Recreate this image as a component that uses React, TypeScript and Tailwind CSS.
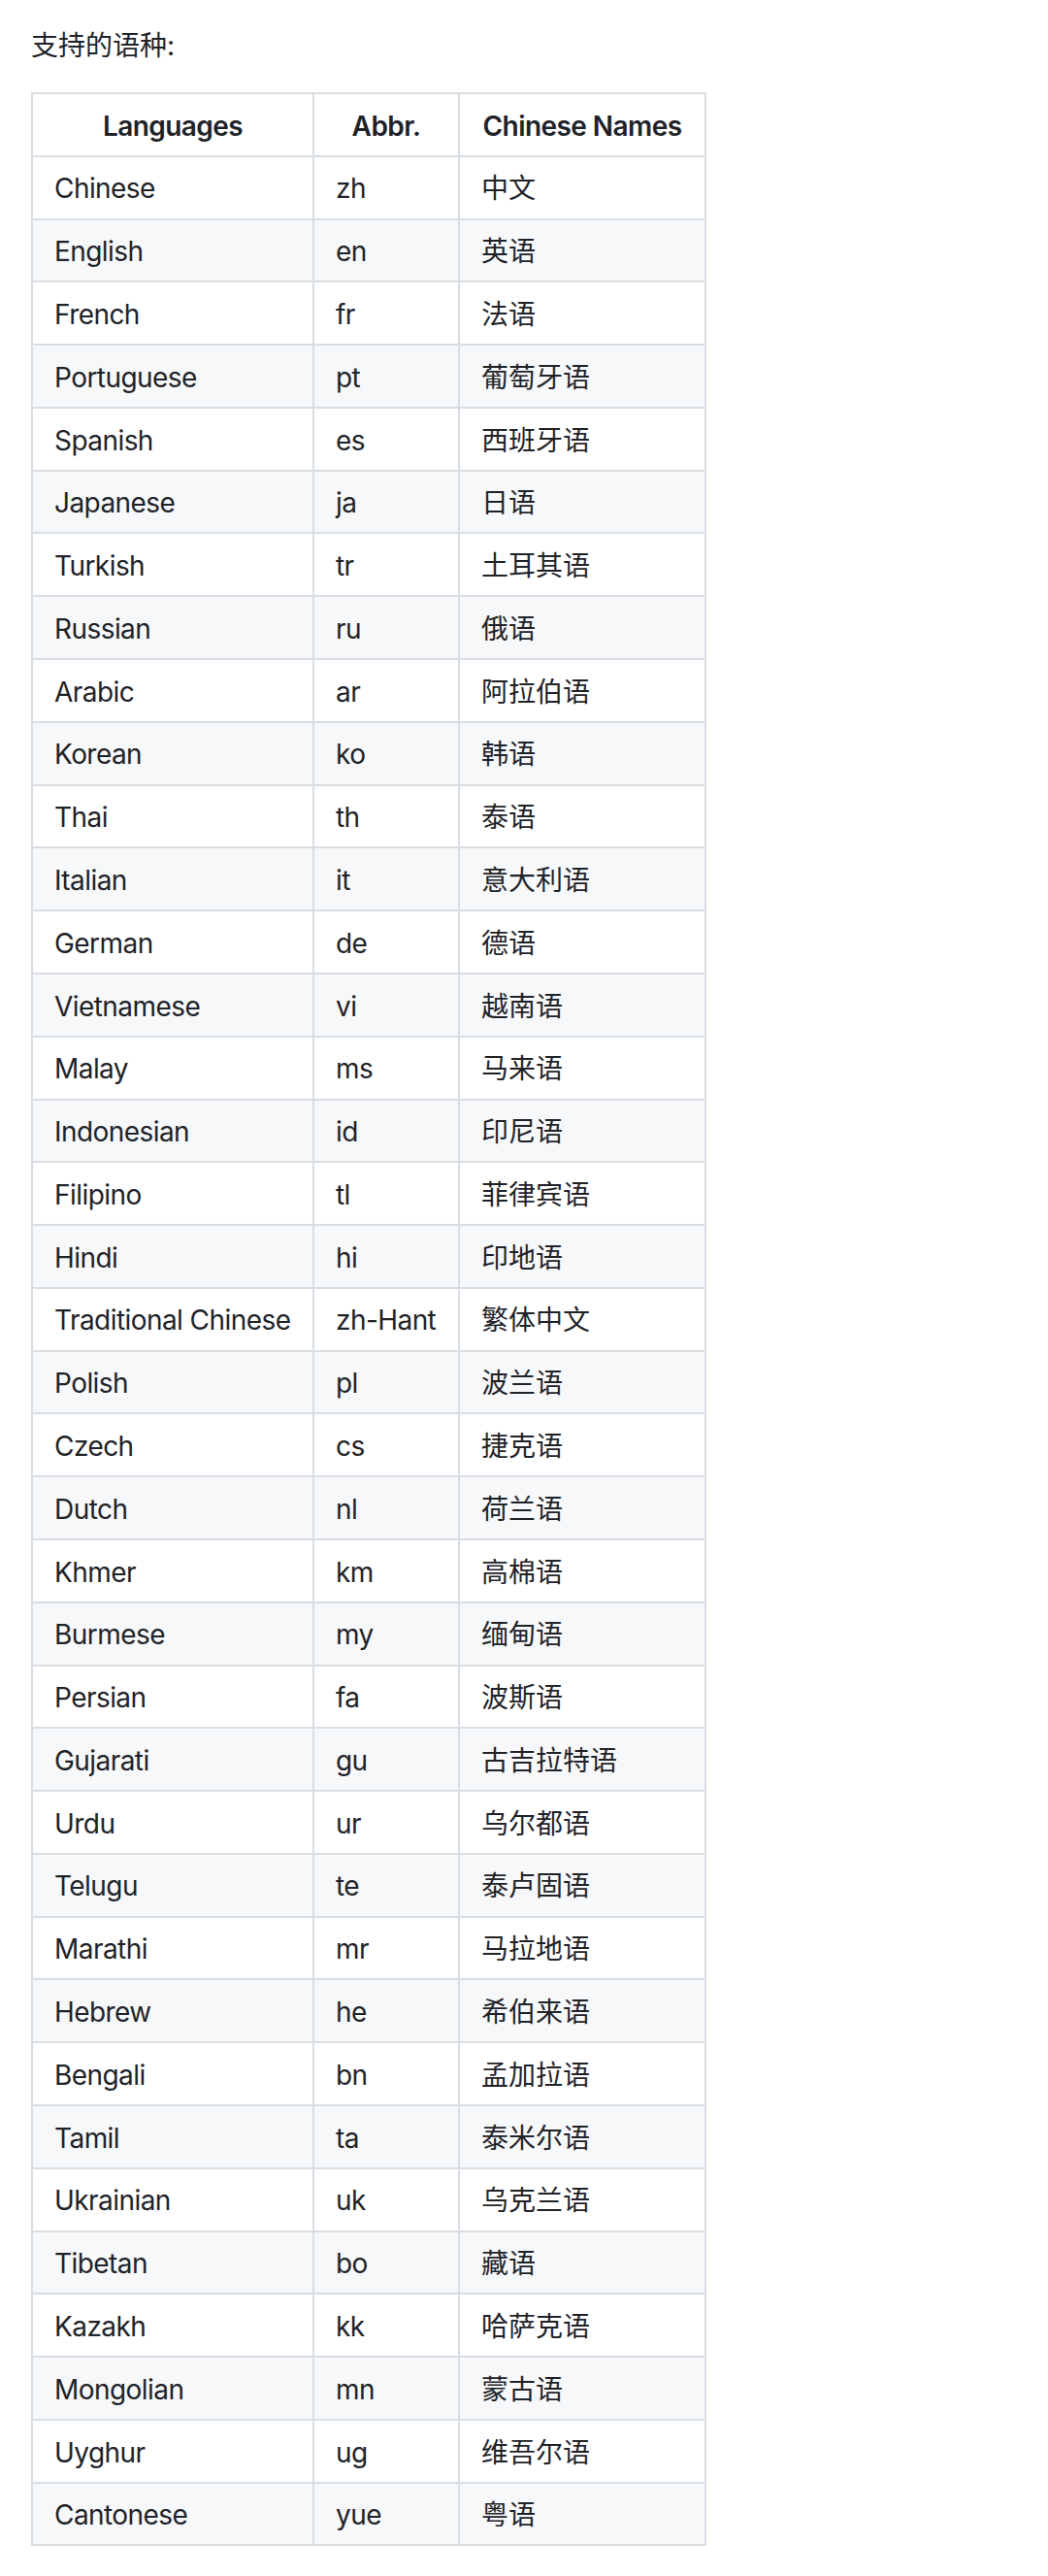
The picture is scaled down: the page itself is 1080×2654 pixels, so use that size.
const ROWS: [string, string, string][] = [
  ['Chinese', 'zh', '中文'],
  ['English', 'en', '英语'],
  ['French', 'fr', '法语'],
  ['Portuguese', 'pt', '葡萄牙语'],
  ['Spanish', 'es', '西班牙语'],
  ['Japanese', 'ja', '日语'],
  ['Turkish', 'tr', '土耳其语'],
  ['Russian', 'ru', '俄语'],
  ['Arabic', 'ar', '阿拉伯语'],
  ['Korean', 'ko', '韩语'],
  ['Thai', 'th', '泰语'],
  ['Italian', 'it', '意大利语'],
  ['German', 'de', '德语'],
  ['Vietnamese', 'vi', '越南语'],
  ['Malay', 'ms', '马来语'],
  ['Indonesian', 'id', '印尼语'],
  ['Filipino', 'tl', '菲律宾语'],
  ['Hindi', 'hi', '印地语'],
  ['Traditional Chinese', 'zh-Hant', '繁体中文'],
  ['Polish', 'pl', '波兰语'],
  ['Czech', 'cs', '捷克语'],
  ['Dutch', 'nl', '荷兰语'],
  ['Khmer', 'km', '高棉语'],
  ['Burmese', 'my', '缅甸语'],
  ['Persian', 'fa', '波斯语'],
  ['Gujarati', 'gu', '古吉拉特语'],
  ['Urdu', 'ur', '乌尔都语'],
  ['Telugu', 'te', '泰卢固语'],
  ['Marathi', 'mr', '马拉地语'],
  ['Hebrew', 'he', '希伯来语'],
  ['Bengali', 'bn', '孟加拉语'],
  ['Tamil', 'ta', '泰米尔语'],
  ['Ukrainian', 'uk', '乌克兰语'],
  ['Tibetan', 'bo', '藏语'],
  ['Kazakh', 'kk', '哈萨克语'],
  ['Mongolian', 'mn', '蒙古语'],
  ['Uyghur', 'ug', '维吾尔语'],
  ['Cantonese', 'yue', '粤语'],
];

const cell = 'whitespace-nowrap border-[2px] border-[#d8dee4] px-[22px] pt-[11.6px] pb-[9.2px]';

export default function App() {
  return (
    <div
      className="min-h-[2654px] bg-white pl-[32px] pt-[26px] text-[28px] leading-[42px] tracking-[-0.02em] text-[#1f2328]"
      style={{ fontFamily: 'Inter, "Noto Sans CJK SC", sans-serif' }}
    >
      {/* Heading paragraph */}
      <p className="mb-[27px] tracking-normal">支持的语种:</p>

      <table className="w-[694px] table-fixed border-collapse">
        <colgroup>
          <col className="w-[290px]" />
          <col className="w-[150px]" />
          <col className="w-[254px]" />
        </colgroup>
        <thead>
          <tr className="bg-white">
            <th className={`${cell} text-center font-semibold`}>Languages</th>
            <th className={`${cell} text-center font-semibold`}>Abbr.</th>
            <th className={`${cell} text-center font-semibold`}>Chinese Names</th>
          </tr>
        </thead>
        <tbody>
          {ROWS.map(([lang, abbr, zh], i) => (
            <tr key={abbr} className={i % 2 === 1 ? 'bg-[#f6f8fa]' : 'bg-white'}>
              <td className={cell}>{lang}</td>
              <td className={cell}>{abbr}</td>
              <td className={`${cell} tracking-normal`}>{zh}</td>
            </tr>
          ))}
        </tbody>
      </table>
    </div>
  );
}
